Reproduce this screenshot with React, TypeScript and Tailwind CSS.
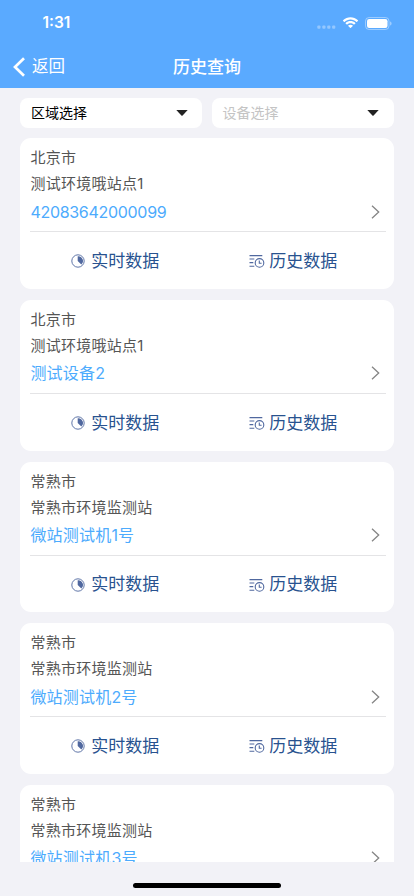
import React from 'react';

const stations = [
  { city: '北京市', site: '测试环境哦站点1', device: '42083642000099', numeric: true },
  { city: '北京市', site: '测试环境哦站点1', device: '测试设备2' },
  { city: '常熟市', site: '常熟市环境监测站', device: '微站测试机1号' },
  { city: '常熟市', site: '常熟市环境监测站', device: '微站测试机2号' },
  { city: '常熟市', site: '常熟市环境监测站', device: '微站测试机3号' },
];

const StatusIcons = () => (
  <div className="flex items-center text-white">
    <svg className="mt-[3px]" width="20" height="12" viewBox="0 0 20 12" fill="currentColor" opacity="0.35">
      <rect x="1.3" y="6.5" width="3.2" height="3.2" rx="1" />
      <rect x="6.3" y="6.5" width="3.2" height="3.2" rx="1" />
      <rect x="11.2" y="6.5" width="3.2" height="3.2" rx="1" />
      <rect x="16.1" y="6.5" width="3.2" height="3.2" rx="1" />
    </svg>
    <svg className="ml-[6px]" width="17" height="12" viewBox="0 0 17 12" fill="currentColor">
      <path d="M8.5 2.5c2.3 0 4.4.9 6 2.4.1.1.3.1.4 0l1.1-1.2c.1-.1.1-.3 0-.4C11.8-.8 5.2-.8 1 3.3c-.1.1-.1.3 0 .4l1.1 1.2c.1.1.3.1.4 0 1.6-1.5 3.7-2.4 6-2.4z" />
      <path d="M8.5 6.3c1.2 0 2.4.5 3.3 1.3.1.1.3.1.4 0l1.200-1.200c.1-.1.1-.3 0-.4-2.800-2.600-7-2.600-9.800 0-.1.1-.1.3 0 .4l1.200 1.200c.1.1.3.1.4 0 .9-.8 2.100-1.300 3.300-1.300z" />
      <path d="M10.800 8.900c.1-.1.1-.3 0-.4-1.300-1.100-3.300-1.100-4.600 0-.1.1-.1.3 0 .4l2.100 2.100c.1.1.3.1.4 0z" />
    </svg>
    <svg className="ml-[6px]" width="27" height="13" viewBox="0 0 27 13">
      <rect x="0.5" y="0.5" width="23.5" height="12" rx="3.6" fill="none" stroke="white" strokeOpacity="0.4" />
      <rect x="2" y="2" width="20.5" height="9" rx="2.2" fill="white" />
      <path d="M25.2 4.500v4c.8-.3 1.300-1.100 1.300-2s-.5-1.700-1.300-2z" fill="white" opacity="0.5" />
    </svg>
  </div>
);

const PieIcon = () => (
  <svg className="-mt-px" width="14" height="14" viewBox="0 0 14 14" fill="none">
    <circle cx="7" cy="7" r="6.2" stroke="#6076a8" strokeWidth="1" />
    <path d="M6.700 7V2.200A4.800 4.800 0 0 1 10.300 10.600Z" fill="#50689f" />
  </svg>
);

const HistoryIcon = () => (
  <svg className="-mt-px" width="16" height="14" viewBox="0 0 16 14" fill="none" stroke="#50689f" strokeWidth="1.1">
    <path d="M0.500 1.600H13.300M0.500 5H5.300M0.500 8.600H4.300M0.500 12.300H5.300" />
    <circle cx="10.5" cy="8.9" r="4.3" />
    <path d="M10.300 6.600V9.200H12.600" />
  </svg>
);

const Select = ({ label, muted }: { label: string; muted?: boolean }) => (
  <div className="flex h-[30px] flex-1 items-center justify-between rounded-[8px] bg-white pl-[10.5px] pr-[14.5px]">
    <span className={muted ? 'text-sm text-[#c4c4c4]' : 'text-sm text-black'}>{label}</span>
    <svg width="12" height="6" viewBox="0 0 12 6" fill="#222">
      <path d="M0.300 0H11.700L6.600 5.600Q6 6.100 5.400 5.600Z" />
    </svg>
  </div>
);

type Station = { city: string; site: string; device: string; numeric?: boolean };

const StationCard = ({ city, site, device, numeric }: Station) => (
  <div className="h-[150.67px] shrink-0 rounded-[11px] bg-white pl-[10px] pr-[7.5px] pt-[7px]">
    <div className="h-[26px] text-[15px] leading-[26px] tracking-[0.25px] text-[#555]">{city}</div>
    <div className="h-[26px] text-[15px] leading-[26px] tracking-[0.25px] text-[#555]">{site}</div>
    <div className="flex h-[35px] items-center justify-between border-b border-[#e4e4e6] pb-[5px] pr-[6px]">
      <span className={numeric ? 'text-[16px] leading-[30px] tracking-[-0.3px] text-[#4dabfd]' : 'text-[16px] leading-[30px] tracking-[0.2px] text-[#4dabfd]'}>
        {device}
      </span>
      <svg width="9" height="14" viewBox="0 0 9 14" fill="none" stroke="#858585" strokeWidth="1.3">
        <path d="M1 0.700L7.700 7L1 13.300" />
      </svg>
    </div>
    <div className="flex h-[59px] items-center text-[17px] text-[#28528f]">
      <div className="flex flex-1 items-center justify-center gap-[6px] pr-[8px]">
        <PieIcon />
        <span>实时数据</span>
      </div>
      <div className="flex flex-1 items-center justify-center gap-[4px] pr-[8px]">
        <HistoryIcon />
        <span>历史数据</span>
      </div>
    </div>
  </div>
);

const App = () => {
  return (
    <div className="flex h-[896px] w-[414px] flex-col overflow-hidden bg-[#f2f2f7] font-['Inter','Noto_Sans_CJK_SC',sans-serif]">
      {/* Header */}
      <header className="h-[88px] shrink-0 bg-[#5aaaff] text-white">
        <div className="flex h-[44px] items-center justify-between pl-[42.5px] pr-[22px] pt-[2px]">
          <span className="text-[15.5px] font-semibold">1:31</span>
          <StatusIcons />
        </div>
        <div className="grid h-[44px] grid-cols-3 items-center text-[17px]">
          <div className="flex items-center gap-[7.5px] pl-[12.5px] pt-px text-[16.5px]">
            <svg width="12" height="20" viewBox="0 0 12 20" fill="none" stroke="currentColor" strokeWidth="2.7">
              <path d="M11 1.200L2 10L11 18.800" />
            </svg>
            <span>返回</span>
          </div>
          <h1 className="pt-[3px] text-center font-medium">历史查询</h1>
        </div>
      </header>

      {/* Filters */}
      <div className="flex shrink-0 gap-[10px] px-[20.4px] pb-[10.3px] pt-[10px]">
        <Select label="区域选择" />
        <Select label="设备选择" muted />
      </div>

      {/* Station list */}
      <main className="flex min-h-0 flex-1 flex-col gap-[11px] overflow-hidden px-[20.4px]">
        {stations.map((station, index) => (
          <StationCard key={index} {...station} />
        ))}
      </main>

      {/* Home indicator */}
      <footer className="flex h-[34px] shrink-0 justify-center pt-[20.5px]">
        <div className="h-[5px] w-[148px] rounded-full bg-black"></div>
      </footer>
    </div>
  );
};

export default App;
